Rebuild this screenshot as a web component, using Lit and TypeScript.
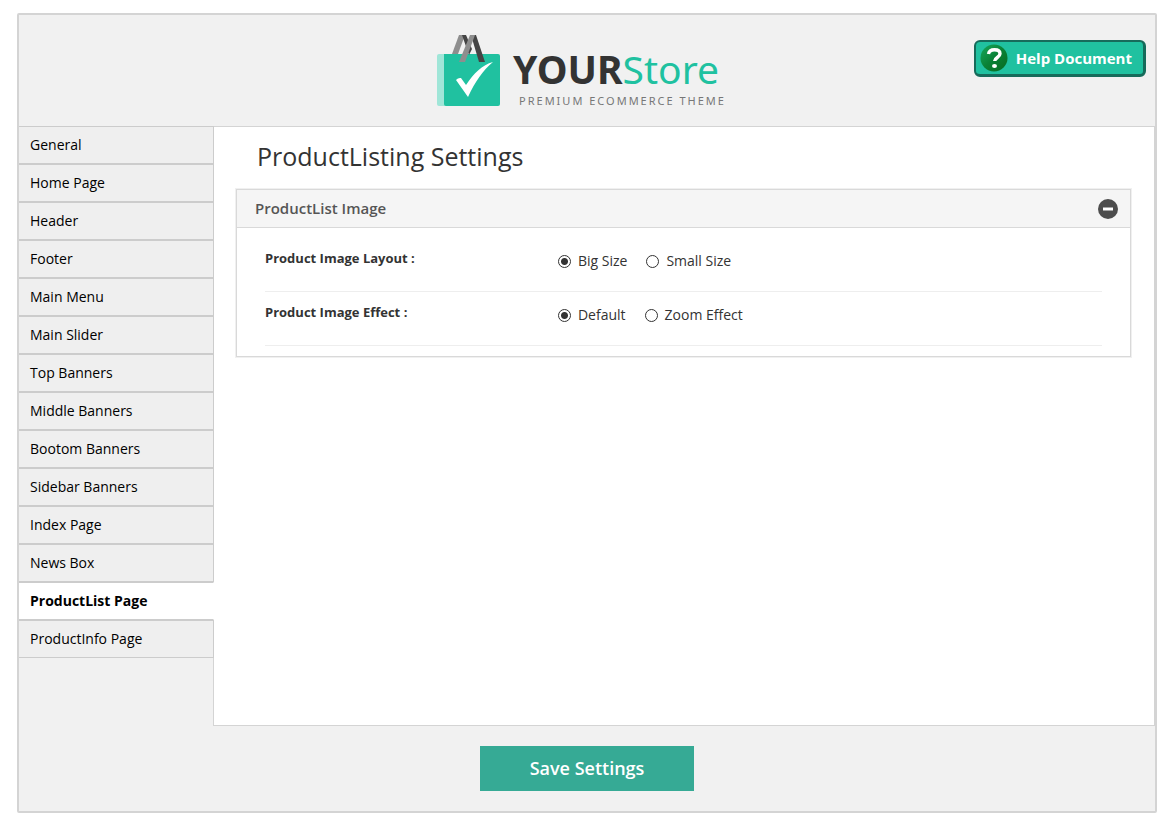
import { LitElement, html, css } from "lit";
import { customElement, state } from "lit/decorators.js";

interface Option {
  value: string;
  label: string;
}

interface Setting {
  name: string;
  label: string;
  options: Option[];
}

const PAGES = [
  "General",
  "Home Page",
  "Header",
  "Footer",
  "Main Menu",
  "Main Slider",
  "Top Banners",
  "Middle Banners",
  "Bootom Banners",
  "Sidebar Banners",
  "Index Page",
  "News Box",
  "ProductList Page",
  "ProductInfo Page",
];

const SETTINGS: Setting[] = [
  {
    name: "image-layout",
    label: "Product Image Layout :",
    options: [
      { value: "big", label: "Big Size" },
      { value: "small", label: "Small Size" },
    ],
  },
  {
    name: "image-effect",
    label: "Product Image Effect :",
    options: [
      { value: "default", label: "Default" },
      { value: "zoom", label: "Zoom Effect" },
    ],
  },
];

@customElement("store-logo")
class StoreLogo extends LitElement {
  static styles = css`
    :host {
      display: flex;
      align-items: flex-end;
      gap: 13px;
      color: #333;
    }
    .bag {
      display: block;
      width: 63px;
      height: 72px;
    }
    .words {
      display: flex;
      flex-direction: column;
      gap: 4px;
    }
    .name {
      font: 700 39px/44px "Noto Sans", "Open Sans", sans-serif;
      white-space: nowrap;
    }
    .light {
      color: #20c1a0;
      font-weight: 400;
    }
    .tagline {
      padding-left: 6px;
      font: 400 11px/12px "Noto Sans", "Open Sans", sans-serif;
      letter-spacing: 2px;
      color: #777;
      white-space: nowrap;
    }
  `;

  render() {
    return html`
      <svg class="bag" viewBox="0 0 63 72" aria-hidden="true">
        <path d="M2 19h8v52H2a2 2 0 0 1-2-2V21a2 2 0 0 1 2-2z" fill="#a0e6d8" />
        <path d="M7 19h54a2 2 0 0 1 2 2v48a2 2 0 0 1-2 2H9a2 2 0 0 1-2-2z" fill="#20c1a0" />
        <path d="M22 0h6l-7 19h-6z" fill="#8e8e8e" />
        <path d="M25 0h4l6 14-3 6z" fill="#444" />
        <path d="M34 0h5l9 27h-6z" fill="#444" />
        <path d="M33 0h5l-10 27h-6z" fill="#8e8e8e" />
        <path d="M19 45c2-2 4-2 5-2l5 7c8-12 16-20 27-23-10 8-18 20-25 35z" fill="#fff" />
      </svg>
      <div class="words">
        <span class="name">YOUR<span class="light">Store</span></span>
        <span class="tagline">PREMIUM ECOMMERCE THEME</span>
      </div>
    `;
  }
}

@customElement("settings-panel")
class SettingsPanel extends LitElement {
  @state() private open = true;

  static styles = css`
    :host {
      display: block;
      border: 1px solid #d9d9d9;
      box-shadow: 0 0 0 1px #f0f0f0;
    }
    .bar {
      display: flex;
      align-items: center;
      justify-content: space-between;
      padding: 0 12px 0 18px;
      background: #f5f5f5;
      border-bottom: 1px solid #d9d9d9;
    }
    .title {
      margin: 0;
      font-size: 15px;
      font-weight: 600;
      line-height: 37px;
      color: #555;
    }
    .toggle {
      display: flex;
      padding: 0;
      border: 0;
      background: none;
      cursor: pointer;
    }
    .toggle svg {
      width: 20px;
      height: 20px;
    }
    .rows {
      padding: 10px 28px;
    }
    .row {
      display: grid;
      grid-template-columns: 35% 1fr;
      margin: 0;
      padding: 0;
      border: 0;
      border-bottom: 1px solid #eee;
    }
    .label {
      padding: 11px 0 23px;
      font-size: 13px;
      font-weight: 700;
      line-height: 19px;
      color: #333;
    }
    .options {
      display: flex;
      gap: 19px;
      padding: 13px 0 20px;
    }
    .option {
      display: flex;
      align-items: center;
      gap: 7px;
      font-size: 14px;
      line-height: 20px;
      color: #333;
    }
    .radio {
      appearance: none;
      box-sizing: border-box;
      width: 13px;
      height: 13px;
      margin: 0;
      border: 1px solid #333;
      border-radius: 50%;
      background: #fff;
    }
    .radio:checked {
      background: radial-gradient(circle, #333 3px, #fff 4px);
    }
  `;

  render() {
    return html`
      <div class="bar">
        <h2 class="title">ProductList Image</h2>
        <button
          class="toggle"
          type="button"
          aria-label="Toggle ProductList Image"
          aria-expanded=${this.open}
          @click=${() => (this.open = !this.open)}
        >
          <svg viewBox="0 0 20 20" aria-hidden="true">
            <circle cx="10" cy="10" r="10" fill="#4d4d4d" />
            <path d="M5 8.5h10v3H5z" fill="#fff" />
          </svg>
        </button>
      </div>
      ${this.open
        ? html`<div class="rows">
            ${SETTINGS.map(
              (s) => html`<div class="row" role="radiogroup" aria-labelledby=${s.name}>
                <span class="label" id=${s.name}>${s.label}</span>
                <div class="options">
                  ${s.options.map(
                    (o, i) => html`<label class="option">
                      <input class="radio" type="radio" name=${s.name} value=${o.value} ?checked=${i === 0} />
                      ${o.label}
                    </label>`
                  )}
                </div>
              </div>`
            )}
          </div>`
        : ""}
    `;
  }
}

@customElement("app-root")
class AppRoot extends LitElement {
  @state() private current = "ProductList Page";

  static styles = css`
    :host {
      display: block;
      padding: 13px 17px;
      background: #fff;
      font-family: "Open Sans", sans-serif;
      color: #333;
    }
    .frame {
      border: 2px solid #d4d4d4;
      border-radius: 2px;
      background: #f1f1f1;
    }
    .header {
      display: grid;
      grid-template-columns: 1fr auto 1fr;
      align-items: start;
      padding: 20px 9px 19px;
    }
    .logo {
      grid-column: 2;
      padding-right: 11px;
    }
    .help {
      display: flex;
      align-items: center;
      justify-self: end;
      gap: 8px;
      margin-top: 5px;
      padding: 2px 11px 2px 4px;
      border: 2px solid #176b5b;
      border-right-width: 3px;
      border-bottom-width: 3px;
      border-radius: 6px;
      background: #20c1a0;
      color: #fff;
      font-size: 15px;
      font-weight: 700;
      line-height: 28px;
      text-decoration: none;
      white-space: nowrap;
    }
    .help svg {
      width: 28px;
      height: 28px;
    }
    .body {
      display: flex;
    }
    .tabs {
      flex: none;
      width: 195px;
      margin: 0 -1px 0 0;
      padding: 0;
      list-style: none;
      z-index: 1;
    }
    .tab {
      display: block;
      padding: 0 11px;
      border: 1px solid #ccc;
      border-left: 0;
      background: #efefef;
      color: #000;
      font-size: 14px;
      line-height: 36px;
      text-decoration: none;
    }
    .tab.active {
      border-right-color: #fff;
      background: #fff;
      font-weight: 700;
    }
    .main {
      flex: 1;
      min-height: 574px;
      padding: 12px 23px 12px 22px;
      border: 1px solid #d4d4d4;
      background: #fff;
    }
    .heading {
      margin: 0 0 16px;
      padding-left: 21px;
      font-size: 25px;
      font-weight: 400;
      line-height: 34px;
    }
    .footer {
      display: flex;
      justify-content: center;
      padding: 20px;
    }
    .save {
      padding: 0 50px;
      border: 0;
      background: #36aa95;
      color: #fff;
      font: 600 18px/45px "Open Sans", sans-serif;
      cursor: pointer;
    }
  `;

  render() {
    return html`
      <div class="frame">
        <header class="header">
          <store-logo class="logo"></store-logo>
          <a class="help" href="#help">
            <svg viewBox="0 0 28 28" aria-hidden="true">
              <defs>
                <linearGradient id="ball" x1="0" y1="0" x2="1" y2="1">
                  <stop offset="0" stop-color="#16a85c" />
                  <stop offset="0.5" stop-color="#0a8136" />
                  <stop offset="1" stop-color="#07691f" />
                </linearGradient>
              </defs>
              <circle cx="14" cy="14" r="13.5" fill="url(#ball)" />
              <path
                d="M8.500 10c.5-3 2.500-4.200 6-4.200 3.500 0 5.500 1.300 5.500 4 0 3.700-5.300 3.700-5.300 7.200"
                fill="none"
                stroke="#fff"
                stroke-width="3.400"
              />
              <ellipse cx="14.500" cy="22" rx="2.500" ry="2" fill="#fff" />
            </svg>
            Help Document
          </a>
        </header>
        <div class="body">
          <ul class="tabs">
            ${PAGES.map(
              (page) => html`<li>
                <a
                  class="tab ${page === this.current ? "active" : ""}"
                  href="#${page.toLowerCase().replace(" ", "-")}"
                  @click=${() => (this.current = page)}
                  >${page}</a
                >
              </li>`
            )}
          </ul>
          <main class="main">
            <h1 class="heading">ProductListing Settings</h1>
            <settings-panel></settings-panel>
          </main>
        </div>
        <footer class="footer">
          <button class="save" type="button">Save Settings</button>
        </footer>
      </div>
    `;
  }
}
